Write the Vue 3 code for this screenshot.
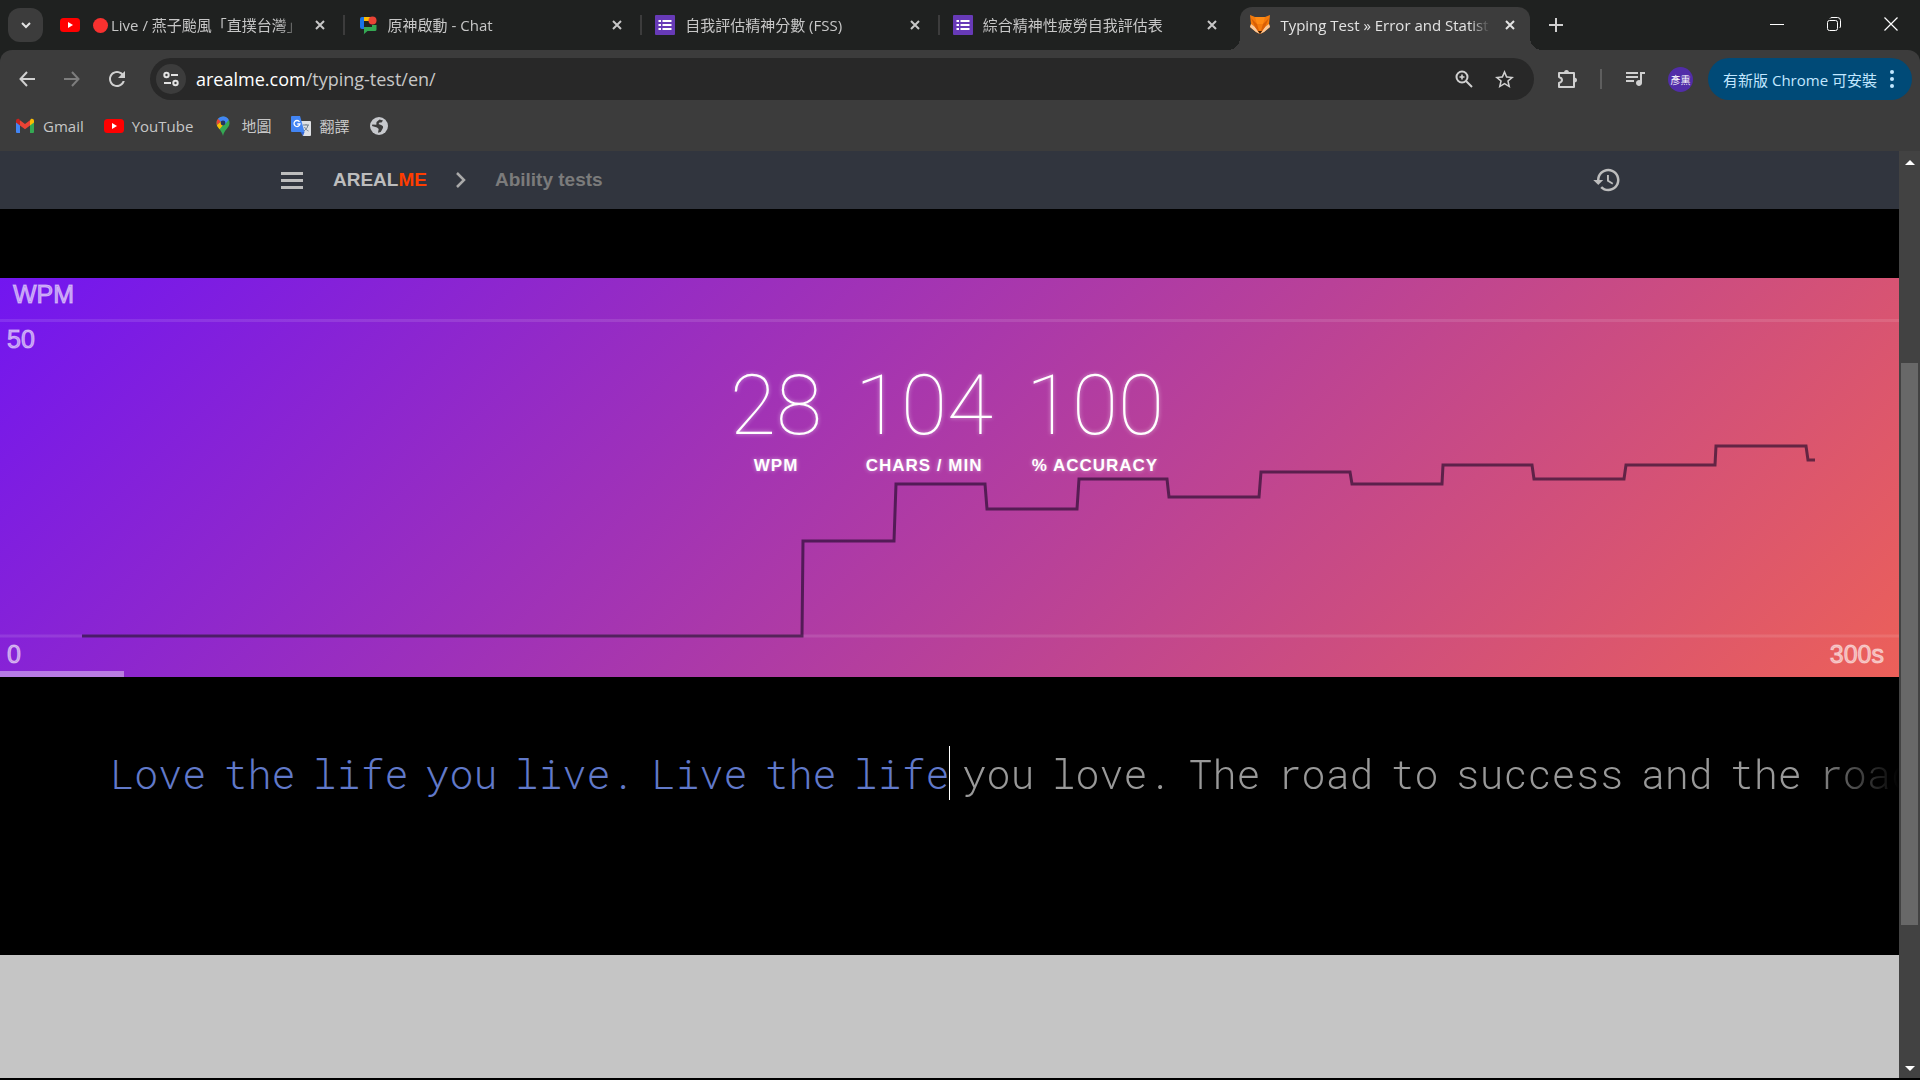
<script setup>
const tabs = [
  { icon: 'youtube', live: true, title: ['Live / ', '燕子颱風「直撲台灣」'] },
  { icon: 'chat', title: ['原神啟動', ' - Chat'] },
  { icon: 'forms', title: ['自我評估精神分數', ' (FSS)'] },
  { icon: 'forms', title: ['綜合精神性疲勞自我評估表'] },
  { icon: 'fox', title: ['Typing Test » Error and Statistics'], active: true },
]

const bookmarks = [
  { icon: 'gmail', label: 'Gmail' },
  { icon: 'youtube', label: 'YouTube' },
  { icon: 'maps', label: '地圖' },
  { icon: 'translate', label: '翻譯' },
  { icon: 'globe', label: '' },
]

const stats = [
  { value: '28', label: 'WPM' },
  { value: '104', label: 'CHARS / MIN' },
  { value: '100', label: '% ACCURACY' },
]

const typed = 'Love the life you live. Live the life'.split(' ')
const upcoming = 'you love. The road to success and the road'.split(' ')

const langOf = (text) => (/[\u4e00-\u9fff]/.test(text) ? 'zh-Hant' : 'en')

const speedLine = [
  [82, 358], [802, 358], [803, 263], [894, 263], [896, 206], [985, 206], [987, 231],
  [1077, 231], [1079, 201], [1167, 201], [1169, 219], [1259, 219], [1261, 194],
  [1350, 194], [1352, 206], [1442, 206], [1443, 187], [1532, 187], [1534, 201],
  [1624, 201], [1626, 187], [1715, 187], [1716, 168], [1806, 168], [1808, 182], [1815, 182],
].map((p) => p.join(',')).join(' ')
</script>

<template>
  <svg class="sprite" aria-hidden="true">
    <symbol id="youtube" viewBox="0 0 20 20">
      <rect x="0" y="3" width="20" height="14" rx="3.5" fill="#f00" />
      <path d="M8 7v6l5-3z" fill="#fff" />
    </symbol>
    <symbol id="chat" viewBox="0 0 20 20">
      <path d="M2 4a2 2 0 0 1 2-2h2v12H4a2 2 0 0 1-2-2z" fill="#1a73e8" />
      <path d="M6 2h7v4H6z" fill="#fbbc04" />
      <path d="M6 6h8v6H6z" fill="#1f2120" />
      <path d="M6 14v4.500l-0.500 1L9.500 16H17a1.500 1.500 0 0 0 1.500-1.500V10H14v2H6z" fill="#34a853" />
      <circle cx="14.500" cy="5.500" r="4" fill="#ea4335" />
    </symbol>
    <symbol id="forms" viewBox="0 0 20 20">
      <rect width="20" height="20" rx="1" fill="#673ab7" />
      <path d="M3.500 5H6v2H3.500zM3.500 9H6v2H3.500zM3.500 13H6v2H3.500zM7.500 5h9v2h-9zM7.500 9h9v2h-9zM7.500 13h9v2h-9z" fill="#fff" />
    </symbol>
    <symbol id="fox" viewBox="0 0 20 20">
      <path d="M0 0l5 2h10l5-2-1 9 1 3-6 5-4 2-4-2-6-5 1-3z" fill="#f47a0c" />
      <path d="M0 12l6 5 4 2-5-7-4-3zM20 12l-6 5-4 2 5-7 4-3z" fill="#f9c89a" />
      <path d="M5 2h10l-2 7H7z" fill="#ff8a14" />
      <path d="M1 3l4 9 5 7-3-10zM19 3l-4 9-5 7 3-10z" fill="#d95f06" />
      <path d="M8 16h4l-2 3z" fill="#3a1c08" />
    </symbol>
    <symbol id="gmail" viewBox="0 0 20 20">
      <path d="M1 5v11a1 1 0 0 0 1 1h3V8z" fill="#4285f4" />
      <path d="M19 5v11a1 1 0 0 1-1 1h-3V8z" fill="#34a853" />
      <path d="M15 4.500V9.500l4-3V5c0-2-2-2.700-3.300-1.700z" fill="#fbbc04" />
      <path d="M1 5v1.500l4 3v-5l-.7-1.200C3 2.300 1 3 1 5z" fill="#c5221f" />
      <path d="M5 4.200v5.300l5 3.800 5-3.800V4.200L10 8z" fill="#ea4335" />
    </symbol>
    <symbol id="maps" viewBox="0 0 20 20">
      <path d="M10 .5a6.500 6.500 0 0 0-6.500 6.500c0 5 5.200 6.500 6.500 13 1.300-6.500 6.500-8 6.500-13A6.500 6.500 0 0 0 10 .5z" fill="#34a853" />
      <path d="M3.800 9c.6 1.600 1.700 2.900 2.800 4.200L12.500 6 10 3.500z" fill="#fbbc04" />
      <path d="M5 2.800A6.500 6.500 0 0 0 3.500 7c0 .8.100 1.500.3 2.100L9 4.500z" fill="#ea4335" />
      <path d="M5 2.800A6.500 6.500 0 0 1 15.800 4L11 9.300 8 6z" fill="#4285f4" />
      <circle cx="10" cy="7" r="2.400" fill="#23345c" />
    </symbol>
    <symbol id="translate" viewBox="0 0 20 20">
      <path d="M8 5h11a1 1 0 0 1 1 1v13a1 1 0 0 1-1 1h-7z" fill="#dfe1e5" />
      <path d="M12 9h6M15 8v1M17 9c-.5 3-2.500 5-4 6M13.500 11c1 2 2.500 3.500 4 4" fill="none" stroke="#6f7f8f" />
      <path d="M1 0h8l4.500 16H1a1 1 0 0 1-1-1V1a1 1 0 0 1 1-1z" fill="#4285f4" />
      <path d="M9.500 16h4L12 20z" fill="#3367d6" />
      <path d="M8.500 5.800A3 3 0 1 0 9 8H6.300" fill="none" stroke="#fff" stroke-width="1.300" />
    </symbol>
    <symbol id="globe" viewBox="0 0 20 20">
      <circle cx="10" cy="10" r="9" fill="#c7c9cd" />
      <path d="M10.500 3.500l3.500 1-1.500 2H10.500L9.500 8l2 .8c2.500.7 3.200 2.200 2.200 3.700l-2 3.500L9 16.800l.7-3.800-1.700-1.500-5-1.500.3-1.500 4 .3L7.500 6z" fill="#3c3c3c" />
    </symbol>
  </svg>

  <div class="window">
    <header class="chrome">
      <div class="tabstrip">
        <button class="tab-search" aria-label="Search tabs">
          <svg viewBox="0 0 12 12" width="12" height="12"><path d="M2 4l4 4 4-4" fill="none" stroke="#e3e3e3" stroke-width="2" /></svg>
        </button>
        <nav class="tabs" aria-label="Tabs">
          <div v-for="(tab, i) in tabs" :key="i" class="tab" :class="{ active: tab.active }">
            <svg class="favicon"><use :href="'#' + tab.icon" /></svg>
            <span class="tab-title">
              <i v-if="tab.live" class="live-dot"></i>
              <span v-for="part in tab.title" :key="part" :lang="langOf(part)">{{ part }}</span>
            </span>
            <button class="tab-close" aria-label="Close tab">
              <svg viewBox="0 0 10 10" width="10" height="10"><path d="M1 1l8 8M9 1L1 9" stroke="currentColor" stroke-width="2" /></svg>
            </button>
          </div>
        </nav>
        <button class="new-tab" aria-label="New tab">
          <svg viewBox="0 0 14 14" width="14" height="14"><path d="M7 0v14M0 7h14" stroke="#d0d0d0" stroke-width="2" /></svg>
        </button>
        <div class="window-controls">
          <button aria-label="Minimize"><svg viewBox="0 0 14 14" width="14" height="14"><path d="M0 7.500h14" stroke="#fff" /></svg></button>
          <button aria-label="Restore">
            <svg viewBox="0 0 14 14" width="14" height="14" fill="none" stroke="#fff"><rect x=".5" y="3.500" width="10" height="10" rx="2" /><path d="M3 1.500q.5-1 2-1h5.500a3 3 0 0 1 3 3V9q0 1.500-1 2" /></svg>
          </button>
          <button aria-label="Close"><svg viewBox="0 0 14 14" width="14" height="14"><path d="M.5.5l13 13M13.500.5l-13 13" stroke="#fff" stroke-width="1.200" /></svg></button>
        </div>
      </div>

      <div class="toolbar">
        <div class="nav-buttons">
          <button aria-label="Back"><svg viewBox="0 0 16 16" width="16" height="16"><path d="M16 8H2M8 1L1.500 8 8 15" fill="none" stroke="#d0d0d0" stroke-width="2" /></svg></button>
          <button aria-label="Forward"><svg viewBox="0 0 16 16" width="16" height="16"><path d="M0 8h14M8 1l6.500 7L8 15" fill="none" stroke="#7d7d7d" stroke-width="2" /></svg></button>
          <button aria-label="Reload"><svg viewBox="3 3 18 18" width="18" height="18"><path fill="#d0d0d0" d="M17.650 6.350C16.200 4.900 14.210 4 12 4c-4.420 0-7.990 3.580-7.990 8s3.570 8 7.990 8c3.730 0 6.840-2.550 7.730-6h-2.080c-.820 2.330-3.040 4-5.650 4-3.310 0-6-2.690-6-6s2.690-6 6-6c1.660 0 3.140.690 4.220 1.780L13 11h7V4l-2.350 2.350z" /></svg></button>
        </div>
        <div class="omnibox">
          <button class="site-info" aria-label="View site information">
            <svg viewBox="0 0 16 16" width="16" height="16" fill="none" stroke="#e3e3e3" stroke-width="2"><circle cx="3.500" cy="4" r="2.200" /><path d="M8 4h7M1 12h7" /><circle cx="12.500" cy="12" r="2.200" /></svg>
          </button>
          <a class="url" href="#">arealme.com<span>/typing-test/en/</span></a>
          <button class="box-action" aria-label="Zoom">
            <svg viewBox="0 0 18 18" width="18" height="18" fill="none" stroke="#d0d0d0" stroke-width="2"><circle cx="7" cy="7" r="5.500" /><path d="M11 11l6 6" /><path d="M4.500 7h5M7 4.500v5" stroke-width="1.600" /></svg>
          </button>
          <button class="box-action" aria-label="Bookmark this tab">
            <svg viewBox="2 2 20 20" width="19" height="19"><path fill="#d0d0d0" d="M22 9.240l-7.190-.620L12 2 9.190 8.630 2 9.240l5.460 4.730L5.820 21 12 17.270 18.180 21l-1.630-7.030L22 9.240zM12 15.400l-3.760 2.270 1-4.280-3.320-2.880 4.380-.380L12 6.100l1.710 4.040 4.380.380-3.320 2.880 1 4.280L12 15.400z" /></svg>
          </button>
        </div>
        <button class="extensions" aria-label="Extensions">
          <svg viewBox="0 0 22 22" width="22" height="22"><path d="M3 5h15v14H3v-4q3-1 3-3t-3-3z" fill="none" stroke="#d0d0d0" stroke-width="2" stroke-linejoin="round" /><path d="M8 5a2.500 3 0 0 1 5 0zM18 9.500a3 2.500 0 0 1 0 5z" fill="#d0d0d0" /></svg>
        </button>
        <i class="divider"></i>
        <button class="media" aria-label="Media controls">
          <svg viewBox="2 3 20 20" width="20" height="20"><path fill="#d0d0d0" d="M15 6H3v2h12V6zm0 4H3v2h12v-2zM3 16h8v-2H3v2zM17 6v8.180c-.310-.110-.650-.180-1-.180-1.660 0-3 1.340-3 3s1.340 3 3 3 3-1.340 3-3V8h3V6h-5z" /></svg>
        </button>
        <button class="avatar" lang="zh-Hant">彥熏</button>
        <button class="update">
          <span><span lang="zh-Hant">有新版</span> Chrome <span lang="zh-Hant">可安裝</span></span>
          <svg viewBox="0 0 4 18" width="4" height="18" fill="#c2e7ff"><circle cx="2" cy="2" r="2" /><circle cx="2" cy="9" r="2" /><circle cx="2" cy="16" r="2" /></svg>
        </button>
      </div>

      <nav class="bookmarks" aria-label="Bookmarks">
        <a v-for="b in bookmarks" :key="b.icon" href="#" :aria-label="b.label || 'Bookmark'">
          <svg class="favicon"><use :href="'#' + b.icon" /></svg>
          <span v-if="b.label" :lang="langOf(b.label)">{{ b.label }}</span>
        </a>
      </nav>
    </header>

    <div class="viewport">
      <main class="page">
        <nav class="site-nav" aria-label="Site">
          <button class="menu" aria-label="Menu"><i></i><i></i><i></i></button>
          <a class="brand" href="#">AREAL<b>ME</b></a>
          <svg class="chevron" viewBox="0 0 10 16" width="10" height="16"><path d="M1 1l7 7-7 7" fill="none" stroke="#aaa" stroke-width="2.500" /></svg>
          <a class="section" href="#">Ability tests</a>
          <button class="history" aria-label="History">
            <svg viewBox="0 0 24 24" width="30" height="30"><path fill="#bdbdbd" d="M13 3c-4.970 0-9 4.030-9 9H1l3.890 3.890.070.140L9 12H6c0-3.870 3.130-7 7-7s7 3.130 7 7-3.130 7-7 7c-1.930 0-3.680-.790-4.940-2.060l-1.420 1.420C8.270 19.990 10.510 21 13 21c4.970 0 9-4.030 9-9s-4.030-9-9-9zm-1 5v5l4.280 2.540.720-1.210-3.500-2.080V8H12z" /></svg>
          </button>
        </nav>

        <section class="chart" aria-label="Typing speed">
          <svg class="plot" viewBox="0 0 1899 399" preserveAspectRatio="none">
            <path d="M0 42.500H1899M0 358H1899" stroke="#fff" stroke-opacity=".11" stroke-width="3" />
            <polyline :points="speedLine" fill="none" stroke="#1c0826" stroke-opacity=".62" stroke-width="3" />
          </svg>
          <span class="axis unit">WPM</span>
          <span class="axis top">50</span>
          <span class="axis zero">0</span>
          <span class="axis end">300s</span>
          <i class="progress"></i>
          <dl class="stats">
            <div v-for="s in stats" :key="s.label">
              <dd>{{ s.value }}</dd>
              <dt>{{ s.label }}</dt>
            </div>
          </dl>
        </section>

        <section class="typing" aria-label="Text to type">
          <p class="typed"><span v-for="(w, i) in typed" :key="i">{{ w }}</span></p>
          <i class="caret"></i>
          <p class="upcoming"><span v-for="(w, i) in upcoming" :key="i">{{ w }}</span></p>
        </section>

        <section class="below"></section>
      </main>

      <div class="scrollbar" aria-hidden="true">
        <i class="arrow up"></i>
        <i class="space-above"></i>
        <i class="thumb"></i>
        <i class="space-below"></i>
        <i class="arrow down"></i>
      </div>
    </div>
  </div>
</template>

<style>
body {
  background: #000;
}
</style>

<style scoped>
* {
  box-sizing: border-box;
}
button {
  display: flex;
  align-items: center;
  justify-content: center;
  padding: 0;
  border: 0;
  background: none;
  font: inherit;
  color: inherit;
}
a {
  color: inherit;
  text-decoration: none;
}
svg {
  display: block;
  flex: none;
}
.sprite {
  position: absolute;
  width: 0;
  height: 0;
}
.window {
  display: flex;
  flex-direction: column;
  min-height: 100vh;
  border-bottom: 2px solid #000;
  font-family: "Open Sans", "Noto Sans CJK TC", sans-serif;
  font-size: 15px;
  color: #c7c7c7;
}
[lang="zh-Hant"] {
  font-family: "Noto Sans CJK TC", sans-serif;
}
.favicon {
  width: 20px;
  height: 20px;
}

/* Tab strip */
.chrome {
  background: #1f2120;
}
.tabstrip {
  display: flex;
  align-items: stretch;
  height: 50px;
}
.tab-search {
  width: 35px;
  height: 34px;
  margin: 8px 3px 0 8px;
  border-radius: 12px;
  background: #3c3c3c;
}
.tabs {
  display: flex;
  flex: 0 1 1488px;
  min-width: 0;
}
.tab {
  position: relative;
  display: flex;
  flex: 1 1 0;
  align-items: center;
  min-width: 0;
  padding: 0 14px;
}
.tab:not(.active)::after {
  content: "";
  position: absolute;
  right: -1px;
  top: 15px;
  width: 2px;
  height: 20px;
  background: #3c3c3c;
}
.tab:nth-last-child(2)::after {
  display: none;
}
.tab.active {
  color: #e3e3e3;
}
.tab.active::before {
  content: "";
  position: absolute;
  inset: 7px 4px 0;
  border-radius: 12px 12px 0 0;
  background: #3c3c3c;
}
.tab.active::after {
  content: "";
  position: absolute;
  inset: auto -8px 0;
  height: 12px;
  background:
    radial-gradient(circle at 0 0, transparent 12px, #3c3c3c 12px) left / 12px 12px no-repeat,
    radial-gradient(circle at 100% 0, transparent 12px, #3c3c3c 12px) right / 12px 12px no-repeat;
}
.tab > * {
  z-index: 1;
}
.tab-title {
  display: flex;
  flex: 1;
  align-items: center;
  overflow: hidden;
  margin: 0 10px;
  white-space: pre;
  line-height: 24px;
  mask-image: linear-gradient(to left, transparent, #000 20px);
}
.live-dot {
  flex: none;
  width: 15px;
  height: 15px;
  margin: 0 3px;
  border-radius: 50%;
  background: #f8312f;
}
.tab-close {
  width: 20px;
  height: 20px;
}
.new-tab {
  width: 44px;
}
.window-controls {
  display: flex;
  margin-left: auto;
  padding-right: 1px;
}
.window-controls button {
  width: 57px;
  height: 48px;
}

/* Toolbar */
.toolbar {
  display: flex;
  align-items: center;
  height: 58px;
  padding-right: 8px;
  border-radius: 12px 12px 0 0;
  background: #3c3c3c;
}
.nav-buttons {
  display: flex;
  padding: 0 11px 0 4px;
}
.nav-buttons button {
  width: 45px;
  height: 42px;
}
.omnibox {
  display: flex;
  flex: 1;
  align-items: center;
  height: 42px;
  padding: 0 10px 0 6px;
  border-radius: 21px;
  background: #282828;
}
.site-info {
  width: 30px;
  height: 30px;
  border-radius: 50%;
  background: #3c3c3c;
}
.url {
  flex: 1;
  margin-left: 10px;
  font-size: 18px;
  color: #fff;
}
.url span {
  color: #c7c7c7;
}
.box-action {
  width: 40px;
  height: 40px;
}
.extensions {
  width: 66px;
  height: 42px;
}
.divider {
  width: 2px;
  height: 20px;
  background: #5e5e5e;
}
.media {
  width: 66px;
  height: 42px;
}
.avatar {
  width: 25px;
  height: 25px;
  margin-right: 15px;
  border-radius: 50%;
  background: #512da8;
  font-size: 10px;
  color: #fff;
}
.update {
  gap: 13px;
  height: 42px;
  padding: 0 18px 0 15px;
  border-radius: 21px;
  background: #004a77;
  color: #c2e7ff;
  white-space: nowrap;
}
.bookmarks {
  display: flex;
  align-items: center;
  gap: 20px;
  height: 43px;
  padding: 0 0 7px 15px;
  background: #3c3c3c;
}
.bookmarks a {
  display: flex;
  align-items: center;
  gap: 8px;
  line-height: 24px;
}

/* Page */
.viewport {
  display: flex;
  flex: 1;
}
.page {
  display: flex;
  flex: 1;
  flex-direction: column;
  min-width: 0;
  background: #000;
}
.site-nav {
  display: flex;
  align-items: center;
  height: 58px;
  padding: 0 277px 0 281px;
  background: #31353e;
  font-family: "Liberation Sans", Arial, sans-serif;
  font-size: 19px;
  font-weight: bold;
}
.menu {
  flex-direction: column;
  gap: 4px;
  width: 22px;
}
.menu i {
  width: 22px;
  height: 3px;
  background: #bdbdbd;
}
.brand {
  margin-left: 30px;
  color: #bdbdbd;
}
.brand b {
  color: #ff3d00;
}
.chevron {
  margin: 0 29px;
}
.section {
  color: #7b7b7b;
}
.history {
  margin-left: auto;
}
.chart {
  position: relative;
  margin-top: 69px;
  padding: 79px 0 201px;
  background: linear-gradient(135deg, #7216f0, #ec6059);
}
.plot {
  position: absolute;
  inset: 0;
  width: 100%;
  height: 100%;
}
.axis {
  position: absolute;
  font: 25px/28px "Liberation Sans", Arial, sans-serif;
  -webkit-text-stroke: 1px currentColor;
  color: rgba(255, 255, 255, 0.5);
}
.unit {
  left: 13px;
  top: 2px;
}
.top {
  left: 7px;
  top: 47px;
}
.zero {
  left: 7px;
  bottom: 9px;
}
.end {
  right: 15px;
  bottom: 9px;
}
.progress {
  position: absolute;
  left: 0;
  bottom: 0;
  width: 124px;
  height: 6px;
  background: rgba(255, 255, 255, 0.4);
}
.stats {
  position: relative;
  display: flex;
  justify-content: center;
  gap: 33px;
  margin: 0;
  padding-right: 5px;
  color: #fff;
  text-align: center;
  text-shadow: 0 0 4px rgba(255, 255, 255, 0.5);
}
.stats dd {
  margin: 0;
  font: 100 84px/98px Roboto, sans-serif;
}
.stats dt {
  font: bold 17px/21px "Liberation Sans", Arial, sans-serif;
  letter-spacing: 1px;
}
.typing {
  display: flex;
  align-items: flex-start;
  height: 278px;
  padding-top: 69px;
  font: 300 40px/54px "Roboto Mono", "Liberation Mono", monospace;
}
.typing p {
  display: flex;
  gap: 17px;
  min-width: 0;
  margin: 0;
  padding-top: 1px;
  overflow: hidden;
}
.typing .typed {
  flex: 0 0 50%;
  justify-content: flex-end;
  color: #6179c9;
}
.typing .upcoming {
  flex: 1;
  padding-left: 13px;
  color: #999;
  mask-image: linear-gradient(to left, transparent, #000 90px);
}
.caret {
  width: 1px;
  height: 54px;
  margin-left: -1px;
  background: #fff;
}
.below {
  flex: 1;
  min-height: 100px;
  background: #c5c5c5;
}

/* Scrollbar */
.scrollbar {
  display: flex;
  flex-direction: column;
  align-items: center;
  width: 21px;
  background: #424242;
}
.arrow {
  width: 0;
  height: 0;
  border: 5px solid transparent;
  flex: none;
}
.up {
  margin: 4px 0 6px;
  border-bottom-color: #fff;
}
.down {
  margin: 8px 0 2px;
  border-top-color: #fff;
}
.space-above {
  flex: 192 1 0;
}
.thumb {
  flex: 562 1 0;
  width: 17px;
  background: #686868;
}
.space-below {
  flex: 133 1 0;
}
</style>
